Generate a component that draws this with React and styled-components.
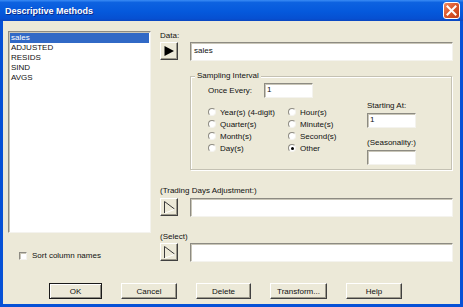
import React from 'react'
import styled, { createGlobalStyle, css } from 'styled-components'

const GlobalStyle = createGlobalStyle`
    html, body {
        margin: 0;
        padding: 0;
        background: #ece9d8;
        overflow: hidden;
    }
    * {
        box-sizing: border-box;
    }
`;

const columns = ['sales', 'ADJUSTED', 'RESIDS', 'SIND', 'AVGS'];

const radios = [
    { label: 'Year(s) (4-digit)' },
    { label: 'Hour(s)' },
    { label: 'Quarter(s)' },
    { label: 'Minute(s)' },
    { label: 'Month(s)' },
    { label: 'Second(s)' },
    { label: 'Day(s)' },
    { label: 'Other', checked: true },
];

const buttons = [
    { label: 'OK', width: 53, primary: true },
    { label: 'Cancel', width: 56 },
    { label: 'Delete', width: 55 },
    { label: 'Transform...', width: 57 },
    { label: 'Help', width: 56 },
];

function PlayIcon({ disabled }) {
    if (disabled) {
        return (
            <svg width="14" height="14" viewBox="0 0 14 14">
                <polyline points="2.5,13 2.5,1.5 12.5,9" fill="none" stroke="#3a3a3a" strokeWidth="1" />
                <line x1="12.5" y1="9.5" x2="3" y2="13" stroke="#ffffff" strokeWidth="1" />
            </svg>
        );
    }
    return (
        <svg width="12" height="12" viewBox="0 0 12 12">
            <polygon points="1.5,1 11,6 1.5,11" fill="#000" />
        </svg>
    );
}

function PickRow({ value, disabled }) {
    return (
        <PickLine>
            <PickButton><PlayIcon disabled={disabled} /></PickButton>
            <TextField>{value}</TextField>
        </PickLine>
    );
}

function App() {
    return (
        <>
            <GlobalStyle />
            <Window>
                <TitleBar>
                    <Title>Descriptive Methods</Title>
                    <CloseButton>
                        <svg width="11" height="11" viewBox="0 0 11 11">
                            <path d="M1.5 1.5 L9.5 9.5 M9.5 1.5 L1.5 9.5" stroke="#fff" strokeWidth="2" strokeLinecap="square" />
                        </svg>
                    </CloseButton>
                </TitleBar>
                <Frame>
                    <Main>
                        <LeftCol>
                            <ListBox>
                                {columns.map((c, i) => (
                                    <ListItem key={c} $selected={i === 0}>{c}</ListItem>
                                ))}
                            </ListBox>
                            <CheckRow>
                                <CheckBox />
                                <span>Sort column names</span>
                            </CheckRow>
                        </LeftCol>
                        <RightCol>
                            <FieldLabel>Data:</FieldLabel>
                            <PickRow value="sales" />
                            <Group>
                                <Legend>Sampling Interval</Legend>
                                <GroupBody>
                                    <div>
                                        <OnceRow>
                                            <OnceLabel>Once Every:</OnceLabel>
                                            <SmallField>1</SmallField>
                                        </OnceRow>
                                        <RadioGrid>
                                            {radios.map(r => (
                                                <RadioItem key={r.label}>
                                                    <RadioDot $checked={r.checked} />
                                                    <span>{r.label}</span>
                                                </RadioItem>
                                            ))}
                                        </RadioGrid>
                                    </div>
                                    <SideCol>
                                        <FieldLabel>Starting At:</FieldLabel>
                                        <SmallField>1</SmallField>
                                        <FieldLabel $top={10}>(Seasonality:)</FieldLabel>
                                        <SmallField />
                                    </SideCol>
                                </GroupBody>
                            </Group>
                            <FieldLabel $top={16} $bottom={2}>(Trading Days Adjustment:)</FieldLabel>
                            <PickRow disabled />
                            <FieldLabel $top={15}>(Select)</FieldLabel>
                            <PickRow disabled />
                        </RightCol>
                    </Main>
                    <ButtonRow>
                        {buttons.map(b => (
                            <PushButton key={b.label} $primary={b.primary} style={{ width: b.width }}>
                                {b.label}
                            </PushButton>
                        ))}
                    </ButtonRow>
                </Frame>
            </Window>
        </>
    );
}

const Window = styled.div`
    width: 463px;
    height: 307px;
    display: flex;
    flex-direction: column;
    font-family: "Liberation Sans", Arial, sans-serif;
    font-size: 8px;
    color: #111;
`;

const TitleBar = styled.div`
    height: 21px;
    flex: none;
    display: flex;
    align-items: center;
    justify-content: space-between;
    padding: 0 3px 0 5px;
    background: linear-gradient(to bottom, #3a8cf5 0%, #0d62e0 12%, #0559dc 55%, #0650d2 88%, #0a46c0 100%);
`;

const Title = styled.span`
    color: #fff;
    font-family: "Liberation Sans", Arial, sans-serif;
    font-weight: bold;
    font-size: 9px;
    text-shadow: 1px 1px 0 #0a2a8a;
`;

const CloseButton = styled.div`
    width: 17px;
    height: 17px;
    border: 1px solid #fff;
    border-radius: 3px;
    background: linear-gradient(135deg, #f08a62 0%, #dd5a2e 45%, #c23c14 100%);
    display: flex;
    align-items: center;
    justify-content: center;
`;

const Frame = styled.div`
    flex: 1;
    display: flex;
    flex-direction: column;
    background: #ece9d8;
    border: 3px solid #0651d6;
    border-top: none;
    padding: 10px 7px 0 5px;
`;

const Main = styled.div`
    display: flex;
    gap: 9px;
`;

const LeftCol = styled.div`
    width: 143px;
    display: flex;
    flex-direction: column;
`;

const sunken = css`
    background: #fff;
    border: 1px solid;
    border-color: #8d8b82 #f4f3ee #f4f3ee #8d8b82;
    box-shadow: inset 1px 1px 0 #c9c6b8;
`;

const ListBox = styled.div`
    ${sunken};
    height: 202px;
    padding: 1px 1px;
`;

const ListItem = styled.div`
    height: 10px;
    line-height: 10px;
    padding-left: 1px;
    font-size: 8px;
    ${p => p.$selected && css`
        background: #3169c6;
        color: #fff;
    `}
`;

const CheckRow = styled.div`
    margin-top: 18px;
    padding-left: 11px;
    display: flex;
    align-items: center;
    gap: 5px;
    line-height: 10px;
`;

const CheckBox = styled.div`
    width: 8px;
    height: 8px;
    ${sunken};
`;

const RightCol = styled.div`
    flex: 1;
    display: flex;
    flex-direction: column;
`;

const FieldLabel = styled.div`
    line-height: 10px;
    height: 10px;
    margin-top: ${p => p.$top || 0}px;
    margin-bottom: ${p => (p.$bottom === undefined ? 1 : p.$bottom)}px;
    white-space: nowrap;
`;

const PickLine = styled.div`
    display: flex;
    align-items: flex-start;
    gap: 12px;
`;

const raised = css`
    background: #ece9d8;
    border: 1px solid;
    border-color: #ffffff #404040 #404040 #ffffff;
    box-shadow: inset -1px -1px 0 #9d9a8c;
`;

const PickButton = styled.div`
    ${raised};
    width: 18px;
    height: 18px;
    display: flex;
    align-items: center;
    justify-content: center;
`;

const TextField = styled.div`
    ${sunken};
    flex: 1;
    height: 19px;
    padding: 3px 3px 0;
    line-height: 10px;
`;

const Group = styled.div`
    position: relative;
    margin: 15px 1px 0 30px;
    height: 94px;
    border: 1px solid #c4c1b3;
    box-shadow: inset 1px 1px 0 #fff, 1px 1px 0 #fff;
`;

const Legend = styled.span`
    position: absolute;
    top: -6px;
    left: 4px;
    padding: 0 2px;
    line-height: 10px;
    background: #ece9d8;
`;

const GroupBody = styled.div`
    display: grid;
    grid-template-columns: 159px auto;
    padding: 6px 0 0 17px;
`;

const OnceRow = styled.div`
    display: flex;
    align-items: center;
    height: 15px;
`;

const OnceLabel = styled.span`
    width: 56px;
`;

const SmallField = styled.div`
    ${sunken};
    width: 49px;
    height: 15px;
    padding: 1px 2px 0;
    line-height: 10px;
`;

const RadioGrid = styled.div`
    margin-top: 8px;
    display: grid;
    grid-template-columns: 80px 80px;
    grid-auto-rows: 12px;
`;

const RadioItem = styled.div`
    display: flex;
    align-items: center;
    gap: 4px;
    white-space: nowrap;
`;

const RadioDot = styled.div`
    width: 8px;
    height: 8px;
    border-radius: 50%;
    background: #fff;
    border: 1px solid;
    border-color: #8d8b82 #f4f3ee #f4f3ee #8d8b82;
    position: relative;
    ${p => p.$checked && css`
        &::after {
            content: '';
            position: absolute;
            left: 1.5px;
            top: 1.5px;
            width: 3px;
            height: 3px;
            border-radius: 50%;
            background: #000;
        }
    `}
`;

const SideCol = styled.div`
    padding-top: 18px;
    display: flex;
    flex-direction: column;
    & > ${FieldLabel} {
        margin-bottom: 2px;
    }
`;

const ButtonRow = styled.div`
    margin-top: 21px;
    padding-left: 41px;
    display: flex;
    gap: 19px;
`;

const PushButton = styled.div`
    ${raised};
    height: 16px;
    display: flex;
    align-items: center;
    justify-content: center;
    white-space: nowrap;
    ${p => p.$primary && css`
        border-color: #1a1a1a;
        box-shadow: inset 1px 1px 0 #fff, inset -1px -1px 0 #8d8b82;
    `}
`;

export default App;
